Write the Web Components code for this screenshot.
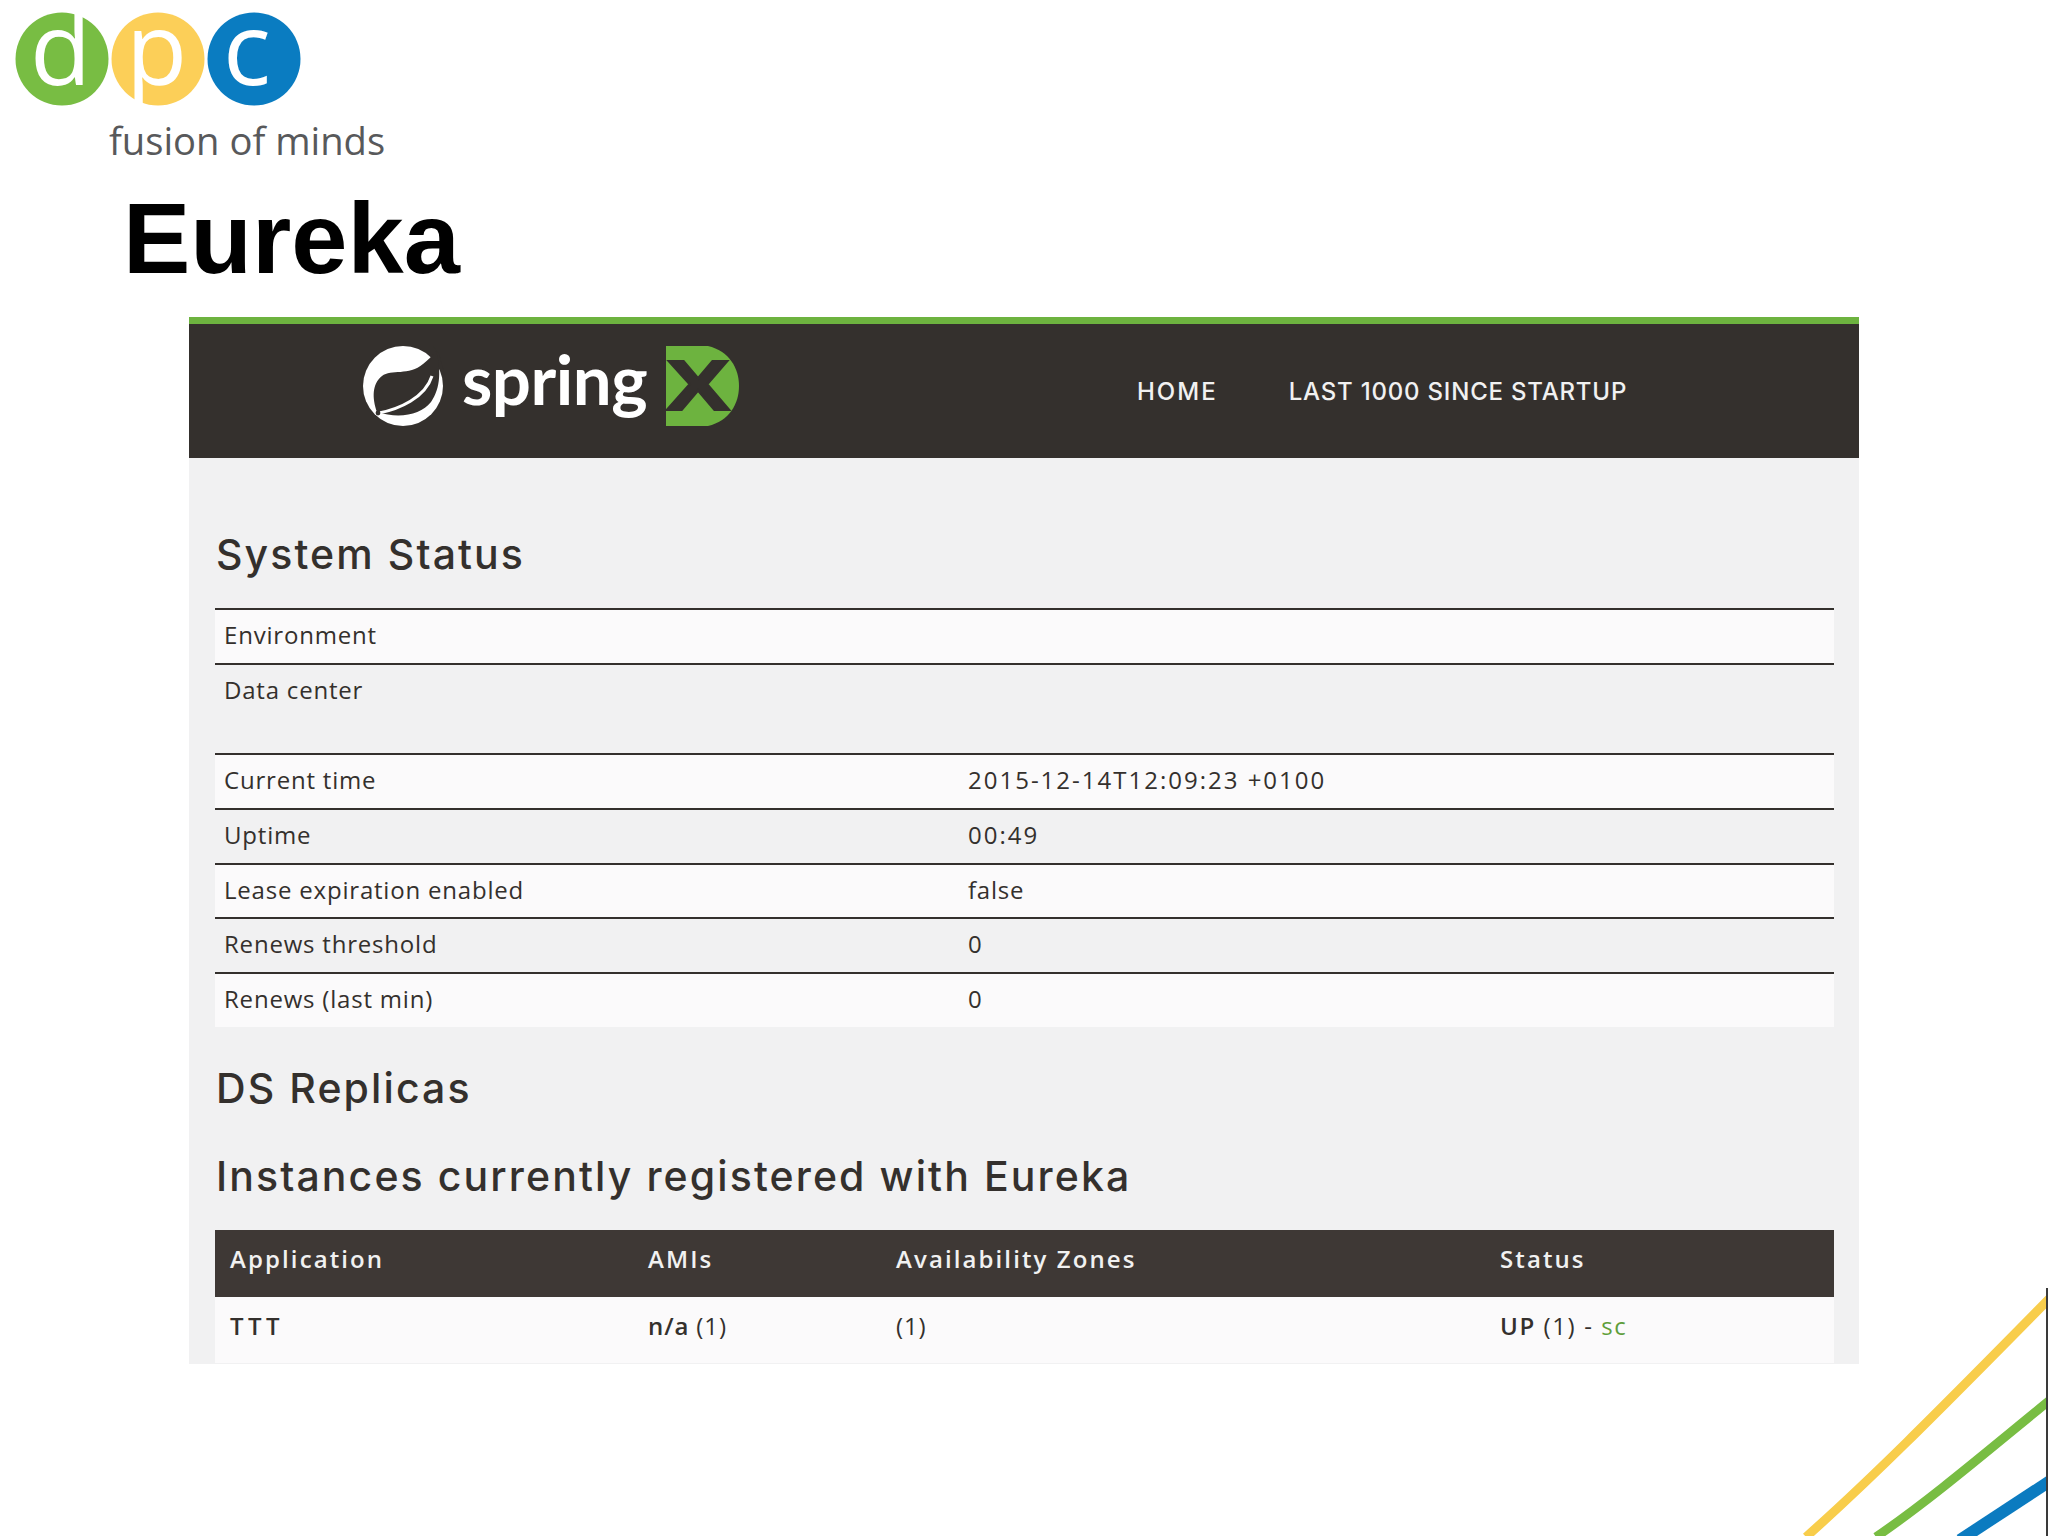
<!DOCTYPE html>
<html>
<head>
<meta charset="utf-8">
<title>Eureka</title>
<style>
  html, body { margin: 0; padding: 0; background: #fff; }
</style>
</head>
<body>
<slide-page>
  <dpc-logo></dpc-logo>
  <slide-title>Eureka</slide-title>
  <eureka-frame>
    <eureka-nav slot="nav">
      <nav-link style="letter-spacing:2px">HOME</nav-link>
      <nav-link>LAST 1000 SINCE STARTUP</nav-link>
    </eureka-nav>
    <section-heading>System Status</section-heading>
    <status-table>
      <status-row label="Environment"></status-row>
      <status-row label="Data center" tall></status-row>
      <status-row label="Current time" value="2015-12-14T12:09:23 +0100"></status-row>
      <status-row label="Uptime" value="00:49"></status-row>
      <status-row label="Lease expiration enabled" value="false"></status-row>
      <status-row label="Renews threshold" value="0"></status-row>
      <status-row label="Renews (last min)" value="0"></status-row>
    </status-table>
    <section-heading style="margin-top:37px">DS Replicas</section-heading>
    <section-heading style="margin-top:40px">Instances currently registered with Eureka</section-heading>
    <instances-table></instances-table>
  </eureka-frame>
  <corner-stripes></corner-stripes>
</slide-page>

<script>
const BODY_FONT = `'Open Sans', 'DejaVu Sans', sans-serif`;
const HEAD_FONT = `Inter, 'Open Sans', sans-serif`;

class BaseEl extends HTMLElement {
  constructor() {
    super();
    this.attachShadow({ mode: 'open' });
  }
}

class SlidePage extends BaseEl {
  connectedCallback() {
    this.shadowRoot.innerHTML = `
      <style>
        :host { display: block; position: relative; width: 2048px; height: 1536px; overflow: hidden; background: #fff; }
      </style>
      <slot></slot>`;
  }
}

class DpcLogo extends BaseEl {
  connectedCallback() {
    this.shadowRoot.innerHTML = `
      <style>
        :host { display: block; height: 170px; }
        svg { display: block; overflow: visible; }
        text { font-family: 'Open Sans', sans-serif; }
      </style>
      <svg width="400" height="170" viewBox="0 0 400 170">
        <circle cx="62" cy="59" r="46.5" fill="#78bd43"/>
        <circle cx="158" cy="59" r="46.5" fill="#fccf58"/>
        <circle cx="254" cy="59" r="46.5" fill="#0a7cc1"/>
        <text x="30" y="85" font-size="100" fill="#fff">d</text>
        <text x="126" y="85" font-size="100" fill="#fff">p</text>
        <text x="223" y="85" font-size="100" fill="#fff">c</text>
        <text x="109" y="155" font-size="38.2" fill="#58595b">fusion of minds</text>
      </svg>`;
  }
}

class SlideTitle extends BaseEl {
  connectedCallback() {
    this.shadowRoot.innerHTML = `
      <style>
        :host { display: block; margin: 18px 0 29px 123px; height: 100px; font: bold 101px/100px 'Liberation Sans', Arial, sans-serif; color: #000; }
      </style>
      <slot></slot>`;
  }
}

class EurekaFrame extends BaseEl {
  connectedCallback() {
    this.shadowRoot.innerHTML = `
      <style>
        :host { display: block; margin-left: 189px; width: 1670px; background: #f1f1f2; }
        .content { padding: 72px 25px 1px 26px; }
      </style>
      <slot name="nav"></slot>
      <div class="content"><slot></slot></div>`;
  }
}

class SpringLogo extends BaseEl {
  connectedCallback() {
    this.shadowRoot.innerHTML = `
      <style>
        :host { display: block; width: 376px; height: 80px; }
        svg { display: block; overflow: visible; }
        .word { font: 700 69px Lato, Inter, sans-serif; letter-spacing: -.5px; fill: #fff; }
        .x { font: bold 71px 'Liberation Sans', sans-serif; fill: #34302d; stroke: #34302d; stroke-width: 2px; }
      </style>
      <svg width="376" height="80" viewBox="0 0 376 80">
        <circle cx="40" cy="40" r="40" fill="#fff"/>
        <path d="M70 0 L82 0 L82 30 L76 8 Z" fill="#34302d"/>
        <path d="M14 66 C9 52 9 38 19 30 C28 23 46 30 60 18 C65 14 69 10 73 5 C78 22 78 42 68 56 C58 69 36 73 14 66 Z" fill="#34302d"/>
        <path d="M16 67 C36 63 62 52 69 30" fill="none" stroke="#fff" stroke-width="3"/>
        <circle cx="15" cy="67" r="2.4" fill="#34302d"/>
        <text class="word" x="99" y="59">spring</text>
        <path d="M303 0 H345 C366 5 376 22 376 40 C376 58 366 75 345 80 H303 Z" fill="#6db33f"/>
        <text class="x" x="303" y="64" textLength="64" lengthAdjust="spacingAndGlyphs">X</text>
      </svg>`;
  }
}

class EurekaNav extends BaseEl {
  connectedCallback() {
    this.shadowRoot.innerHTML = `
      <style>
        :host { display: flex; box-sizing: border-box; height: 141px; background: #34302d; border-top: 7px solid #6db33f; padding: 22px 0 0 174px; }
        .links { display: flex; gap: 71px; margin-left: 398px; height: 90px; align-items: center; }
      </style>
      <spring-logo></spring-logo>
      <div class="links"><slot></slot></div>`;
  }
}

class NavLink extends BaseEl {
  connectedCallback() {
    this.shadowRoot.innerHTML = `
      <style>
        :host { display: block; font: 500 24px ${HEAD_FONT}; letter-spacing: .8px; color: #f1f1f1; white-space: nowrap; }
      </style>
      <slot></slot>`;
  }
}

class SectionHeading extends BaseEl {
  connectedCallback() {
    this.shadowRoot.innerHTML = `
      <style>
        :host { display: block; font: 500 41px/48px ${HEAD_FONT}; letter-spacing: 2.1px; color: #34302d; margin-left: 1px; white-space: nowrap; }
      </style>
      <slot></slot>`;
  }
}

class StatusTable extends BaseEl {
  connectedCallback() {
    this.shadowRoot.innerHTML = `
      <style>
        :host { display: block; margin-top: 30px; background: #fbfafb; }
        ::slotted(status-row:nth-child(even)) { background: #f1f1f2; }
      </style>
      <slot></slot>`;
  }
}

class StatusRow extends BaseEl {
  connectedCallback() {
    const label = this.getAttribute('label');
    const value = this.getAttribute('value') || '';
    const numeric = /\d/.test(value);
    this.shadowRoot.innerHTML = `
      <style>
        :host { display: grid; grid-template-columns: 753px 1fr; box-sizing: border-box; height: 54.85px; border-top: 2px solid #34302d; font: 24px/49px ${BODY_FONT}; letter-spacing: .8px; color: #34302d; }
        :host([tall]) { height: 90px; }
        div { padding-left: 9px; white-space: nowrap; }
        .value { padding-left: 0; }
        .num { letter-spacing: 2px; }
      </style>
      <div>${label}</div><div class="value${numeric ? ' num' : ''}">${value}</div>`;
  }
}

class InstancesTable extends BaseEl {
  connectedCallback() {
    this.shadowRoot.innerHTML = `
      <style>
        :host { display: block; margin-top: 30px; font: 24px/57px ${BODY_FONT}; letter-spacing: .9px; color: #34302d; }
        .row { display: grid; grid-template-columns: 418px 248px 604px 1fr; height: 66px; background: #fbfafb; }
        .head { height: 67px; background: #3e3835; color: #f1f1f1; font-weight: 600; letter-spacing: 2.1px; }
        .row > div { padding-left: 15px; white-space: nowrap; }
        b { font-weight: 600; }
        .ttt { letter-spacing: 4.5px; }
        .up { letter-spacing: 1.6px; }
        .sc { color: #5f9e3a; }
      </style>
      <div class="row head"><div>Application</div><div>AMIs</div><div>Availability Zones</div><div>Status</div></div>
      <div class="row">
        <div><b class="ttt">TTT</b></div>
        <div><b>n/a</b> (1)</div>
        <div>(1)</div>
        <div class="up"><b>UP</b> (1) - <span class="sc">sc</span></div>
      </div>`;
  }
}

class CornerStripes extends BaseEl {
  connectedCallback() {
    this.shadowRoot.innerHTML = `
      <style>
        :host { position: absolute; right: 0; bottom: 0; width: 260px; height: 250px; display: block; }
        svg { display: block; }
      </style>
      <svg width="260" height="250" viewBox="1788 1286 260 250" fill="none">
        <path d="M1806 1537 C1870 1480 1930 1420 2050 1298" stroke="#f8cd4b" stroke-width="9"/>
        <path d="M1876 1537 C1930 1500 1985 1453 2050 1400" stroke="#78bd43" stroke-width="9"/>
        <path d="M1960 1540 L2050 1481" stroke="#0b7bc0" stroke-width="12"/>
        <rect x="2046" y="1288" width="2" height="248" fill="#3a3a3a"/>
      </svg>`;
  }
}

customElements.define('slide-page', SlidePage);
customElements.define('dpc-logo', DpcLogo);
customElements.define('slide-title', SlideTitle);
customElements.define('eureka-frame', EurekaFrame);
customElements.define('spring-logo', SpringLogo);
customElements.define('eureka-nav', EurekaNav);
customElements.define('nav-link', NavLink);
customElements.define('section-heading', SectionHeading);
customElements.define('status-table', StatusTable);
customElements.define('status-row', StatusRow);
customElements.define('instances-table', InstancesTable);
customElements.define('corner-stripes', CornerStripes);
</script>
</body>
</html>
